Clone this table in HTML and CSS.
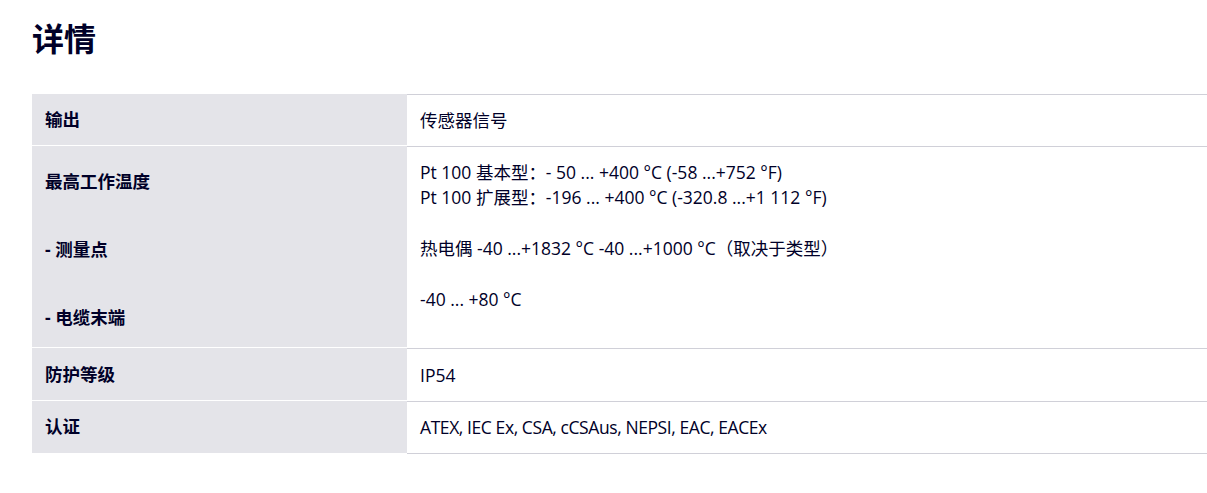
FILE: index.html
```html
<!DOCTYPE html>
<html lang="zh-CN">
<head>
<meta charset="utf-8">
<title>详情</title>
<link rel="stylesheet" href="styles.css">
</head>
<body>
<section class="details">
  <h2 class="details-title">详情</h2>
  <div class="spec-table">
    <div class="spec-row">
      <div class="spec-key">输出</div>
      <div class="spec-val">传感器信号</div>
    </div>
    <div class="spec-row spec-row-tall">
      <div class="spec-key spec-key-stack">
        <span class="key-line key-first">最高工作温度</span>
        <span class="key-line">- 测量点</span>
        <span class="key-line">- 电缆末端</span>
      </div>
      <div class="spec-val spec-val-stack">
        <span class="val-line">Pt 100 基本型：- 50 ... +400 °C (-58 ...+752 °F)</span>
        <span class="val-line">Pt 100 扩展型：-196 ... +400 °C (-320.8 ...+1 112 °F)</span>
        <span class="val-line val-gap">热电偶 -40 ...+1832 °C -40 ...+1000 °C（取决于类型）</span>
        <span class="val-line val-gap">-40 ... +80 °C</span>
      </div>
    </div>
    <div class="spec-row spec-row-ip">
      <div class="spec-key">防护等级</div>
      <div class="spec-val">IP54</div>
    </div>
    <div class="spec-row spec-row-last">
      <div class="spec-key">认证</div>
      <div class="spec-val spec-val-caps">ATEX, IEC Ex, CSA, cCSAus, NEPSI, EAC, EACEx</div>
    </div>
  </div>
</section>
</body>
</html>
```

FILE: styles.css
```css
html, body {
  margin: 0;
  padding: 0;
  background: #ffffff;
}

body {
  font-family: "Open Sans", "Noto Sans CJK SC", sans-serif;
  color: #000028;
}

.details {
  padding-left: 32px;
}

.details-title {
  margin: 18px 0 38px 0;
  font-family: "Noto Sans CJK SC", "Noto Sans", sans-serif;
  font-size: 32px;
  line-height: 38px;
  font-weight: 700;
  color: #000028;
}

.spec-table {
  display: flex;
  flex-direction: column;
}

.spec-row {
  display: grid;
  grid-template-columns: 375px 1fr;
}

.spec-key {
  background: #e4e4e9;
  border-bottom: 1px solid #ffffff;
  padding: 13px 13px;
  height: 25px;
  font-family: "Open Sans", "Noto Sans CJK SC", sans-serif;
  font-size: 17.5px;
  line-height: 25px;
  font-weight: 700;
}

.spec-val {
  border-top: 1px solid #d0d0d8;
  padding: 13px 13px;
  height: 25px;
  font-family: "Open Sans", "Noto Sans CJK SC", sans-serif;
  font-size: 17.5px;
  line-height: 25px;
}

.spec-row-ip .spec-key,
.spec-row-ip .spec-val {
  padding-top: 14px;
}

.spec-val-caps {
  letter-spacing: -0.42px;
}

.spec-row-last .spec-key {
  border-bottom: 1px solid #e4e4e9;
}

.spec-row-last .spec-val {
  border-bottom: 1px solid #d0d0d8;
}

.spec-key-stack {
  display: flex;
  flex-direction: column;
  gap: 42.6px;
  height: auto;
  padding-top: 23px;
  padding-bottom: 17px;
}

.spec-val-stack {
  display: flex;
  flex-direction: column;
  height: auto;
  padding-bottom: 35px;
}

.key-line,
.val-line {
  display: block;
  height: 25.4px;
  line-height: 25.4px;
}

.val-gap {
  margin-top: 25.4px;
}
```
